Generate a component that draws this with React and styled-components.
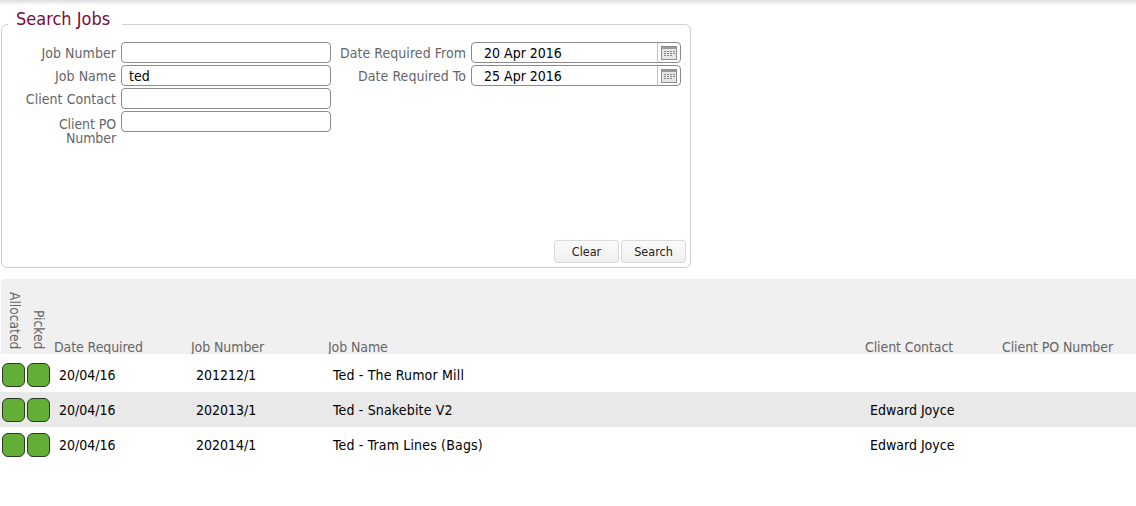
import React from "react";
import styled, { createGlobalStyle } from "styled-components";

const GlobalStyle = createGlobalStyle`
  html, body {
    margin: 0;
    padding: 0;
    background: #fff;
    font-family: "DejaVu Sans", Verdana, sans-serif;
    font-stretch: condensed;
    font-size: 14px;
    color: #000;
  }
`;

const Page = styled.div`
  width: 1136px;
  height: 506px;
  overflow: hidden;
`;

const TopShade = styled.div`
  height: 3px;
  background: linear-gradient(#dedede, #eeeeee);
  box-shadow: 0 1px 2px rgba(0, 0, 0, 0.08);
`;

const SearchBox = styled.fieldset`
  box-sizing: border-box;
  width: 690px;
  height: 261px;
  margin: 4px 0 11px 1px;
  padding: 1px 4px 0 0;
  border: 1px solid #cfcfcf;
  border-radius: 6px;
  display: flex;
  flex-direction: column;
`;

const Legend = styled.legend`
  margin-left: 6px;
  padding: 0 12px 10px 8px;
  font-size: 18px;
  line-height: 24px;
  color: #7b0d38;
`;

const FormColumns = styled.div`
  display: flex;
  gap: 5px;
  flex: 1;
`;

const FormColumn = styled.div`
  display: grid;
  grid-template-columns: ${(p) => p.$labelWidth}px 210px;
  column-gap: 5px;
  row-gap: 2px;
  align-content: start;
`;

const Label = styled.label`
  text-align: right;
  color: #666;
  line-height: 14px;
  padding-top: 4px;
  letter-spacing: 0.05px;
`;

const WrappedLabel = styled(Label)`
  padding: 6px 0 0 14px;
  letter-spacing: -0.1px;
`;

const TextInput = styled.div`
  box-sizing: border-box;
  height: 21px;
  border: 1px solid #8b8b8b;
  border-radius: 4px;
  padding-left: ${(p) => p.$indent}px;
  line-height: 21px;
  display: flex;
  justify-content: space-between;
`;

const CalendarButton = styled.span`
  width: 22px;
  border-left: 1px solid #c4c4c4;
  display: flex;
  align-items: center;
  justify-content: center;
`;

const Actions = styled.div`
  display: flex;
  justify-content: flex-end;
  gap: 2px;
  padding-bottom: 4px;
`;

const Button = styled.button`
  box-sizing: border-box;
  width: ${(p) => p.$width}px;
  height: 23px;
  padding: 0;
  border: 1px solid #dadada;
  border-radius: 3px;
  background: linear-gradient(#fafafa, #f0f0f0);
  font: inherit;
  font-size: 12.5px;
  color: #222;
`;

const columns = "25px 28px 137px 137px 537px 137px 1fr";

const HeaderRow = styled.div`
  display: grid;
  grid-template-columns: ${columns};
  height: 75px;
  margin-left: 1px;
  background: #f0f0f0;
  border-radius: 4px 0 0 0;
  align-items: end;
  color: #666;
`;

const HeaderCell = styled.div`
  line-height: 14px;
  height: 14px;
  overflow: hidden;
  white-space: nowrap;
  letter-spacing: -0.1px;
`;

const VerticalHeader = styled.div`
  writing-mode: vertical-rl;
  justify-self: center;
  line-height: 16px;
  margin: 0 0 5px ${(p) => p.$nudge}px;
  font-size: 13.7px;
`;

const Rows = styled.div`
  padding-top: 3px;
`;

const Row = styled.div`
  display: grid;
  grid-template-columns: ${columns};
  height: 35px;
  padding-left: 1px;
  align-items: center;
  background: ${(p) => (p.$shaded ? "#e9e9e9" : "#fff")};
`;

const Status = styled.span`
  box-sizing: border-box;
  display: block;
  width: 23px;
  height: 24px;
  margin-left: 1px;
  background: #62ae37;
  border: 1px solid #2c3a24;
  border-radius: 6px;
`;

const Cell = styled.div`
  padding-left: 5px;
`;

const NameCell = styled(Cell)`
  letter-spacing: 0.17px;
`;

const Calendar = () => (
  <svg width="16" height="14" viewBox="0 0 16 14">
    <rect x="0.5" y="0.5" width="15" height="13" fill="#e6e6e6" stroke="#8f8f8f" />
    <rect x="1" y="1" width="14" height="2" fill="#9a9a9a" />
    <path
      d="M3 5h2v1H3zM6 5h2v1H6zM9 5h2v1H9zM12 5h2v1h-2zM3 7h2v1H3zM6 7h2v1H6zM9 7h2v1H9zM12 7h2v1h-2zM3 9h2v1H3zM6 9h2v1H6zM9 9h2v1H9z"
      fill="#8a8a8a"
    />
  </svg>
);

const jobs = [
  { number: "201212/1", name: "Ted - The Rumor Mill", contact: "" },
  { number: "202013/1", name: "Ted - Snakebite V2", contact: "Edward Joyce" },
  { number: "202014/1", name: "Ted - Tram Lines (Bags)", contact: "Edward Joyce" },
];

const App = () => {
  return (
    <Page>
      <GlobalStyle />
      <TopShade />
      <SearchBox>
        <Legend>Search Jobs</Legend>
        <FormColumns>
          <FormColumn $labelWidth={114}>
            <Label>Job Number</Label>
            <TextInput />
            <Label>Job Name</Label>
            <TextInput $indent={7}>ted</TextInput>
            <Label>Client Contact</Label>
            <TextInput />
            <WrappedLabel>Client PO Number</WrappedLabel>
            <TextInput />
          </FormColumn>
          <FormColumn $labelWidth={130}>
            <Label>Date Required From</Label>
            <TextInput $indent={12}>
              20 Apr 2016
              <CalendarButton>
                <Calendar />
              </CalendarButton>
            </TextInput>
            <Label>Date Required To</Label>
            <TextInput $indent={12}>
              25 Apr 2016
              <CalendarButton>
                <Calendar />
              </CalendarButton>
            </TextInput>
          </FormColumn>
        </FormColumns>
        <Actions>
          <Button $width={65}>Clear</Button>
          <Button $width={65}>Search</Button>
        </Actions>
      </SearchBox>
      <HeaderRow>
        <VerticalHeader $nudge={3}>Allocated</VerticalHeader>
        <VerticalHeader $nudge={-2}>Picked</VerticalHeader>
        <HeaderCell>Date Required</HeaderCell>
        <HeaderCell>Job Number</HeaderCell>
        <HeaderCell>Job Name</HeaderCell>
        <HeaderCell>Client Contact</HeaderCell>
        <HeaderCell>Client PO Number</HeaderCell>
      </HeaderRow>
      <Rows>
        {jobs.map((job, i) => (
          <Row key={job.number} $shaded={i === 1}>
            <Status />
            <Status />
            <Cell>20/04/16</Cell>
            <Cell>{job.number}</Cell>
            <NameCell>{job.name}</NameCell>
            <Cell>{job.contact}</Cell>
            <Cell />
          </Row>
        ))}
      </Rows>
    </Page>
  );
};

export default App;
